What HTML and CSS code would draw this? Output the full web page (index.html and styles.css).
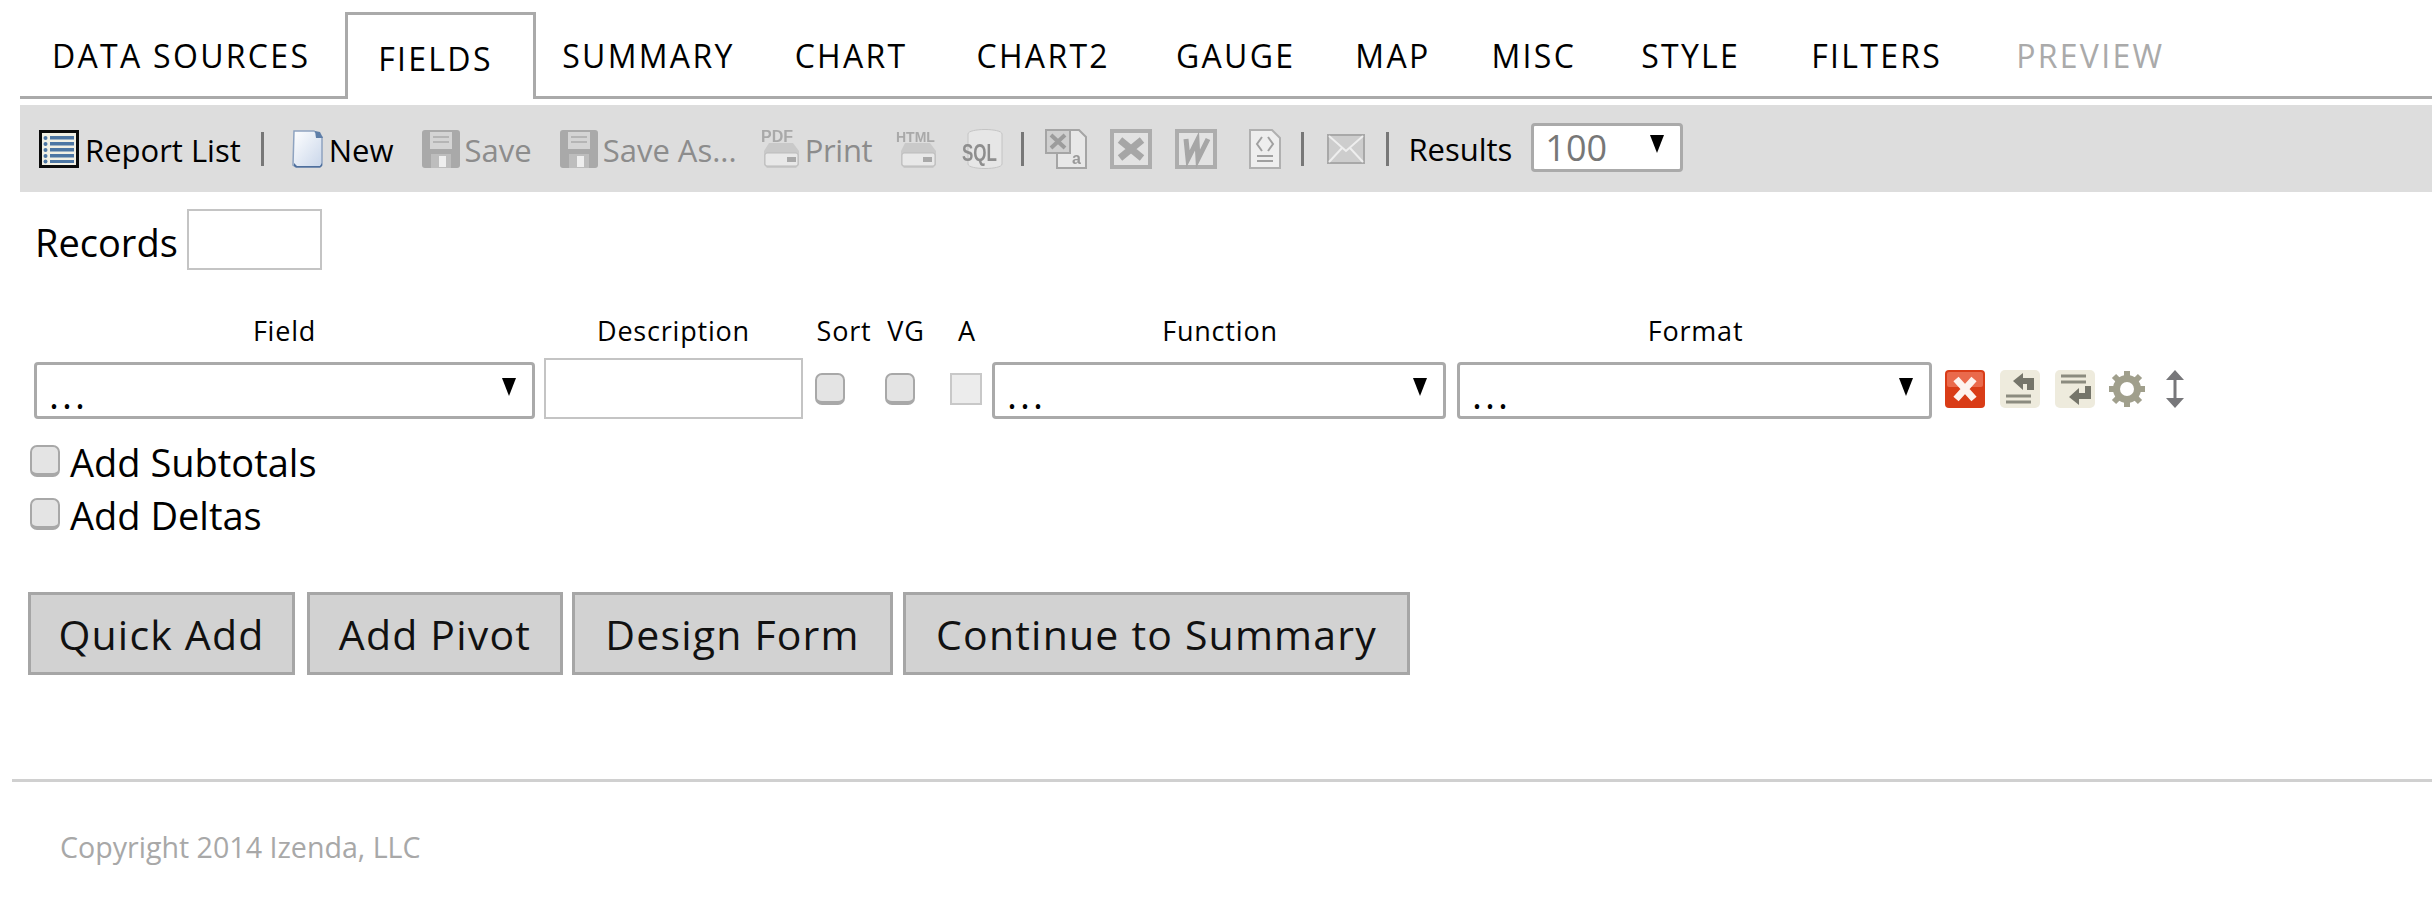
FILE: index.html
```html
<!DOCTYPE html>
<html lang="en">
<head>
    <meta charset="UTF-8">
    <title>Report Designer</title>
    <link rel="stylesheet" href="styles.css">
</head>
<body>
    <!-- Tabs -->
    <ul class="tabs">
        <li class="tab tab-data">DATA SOURCES</li>
        <li class="tab tab-active">FIELDS</li>
        <li class="tab tab-summary">SUMMARY</li>
        <li class="tab tab-chart">CHART</li>
        <li class="tab tab-chart2">CHART2</li>
        <li class="tab tab-gauge">GAUGE</li>
        <li class="tab tab-map">MAP</li>
        <li class="tab tab-misc">MISC</li>
        <li class="tab tab-style">STYLE</li>
        <li class="tab tab-filters">FILTERS</li>
        <li class="tab tab-preview">PREVIEW</li>
    </ul>

    <!-- Toolbar -->
    <div class="toolbar">
        <svg class="icon icon-list" viewBox="0 0 40 38">
            <rect x="1.5" y="1.5" width="37" height="35" fill="#f2f0e4" stroke="#0b0b0b" stroke-width="3"/>
            <g fill="#4d76a3">
                <rect x="11" y="6" width="24" height="3.5"/><rect x="11" y="12" width="24" height="3.5"/>
                <rect x="11" y="18" width="24" height="3.5"/><rect x="11" y="24" width="24" height="3.5"/>
                <rect x="11" y="30" width="24" height="3"/>
                <circle cx="6.5" cy="8" r="2"/><circle cx="6.5" cy="14" r="2"/><circle cx="6.5" cy="20" r="2"/>
                <circle cx="6.5" cy="26" r="2"/><circle cx="6.5" cy="31.5" r="2"/>
            </g>
        </svg>
        <span class="tool-text text-report">Report List</span>
        <span class="sep sep-a"></span>
        <svg class="icon icon-new" viewBox="0 0 32 38">
            <defs>
                <linearGradient id="page" x1="0" y1="0" x2="1" y2="1">
                    <stop offset="0" stop-color="#ffffff"/>
                    <stop offset="1" stop-color="#c9d6ea"/>
                </linearGradient>
            </defs>
            <path d="M2 1h20l8 6v28l-2 2H4l-3-2z" fill="url(#page)" stroke="#8ea3c0" stroke-width="1.5"/>
            <path d="M2 33l3 3h23l2-3v3l-2 1.5H4L2 36z" fill="#4e6f9c"/>
            <path d="M23 1l1 7 7 0-3-6z" fill="#5e7ea8"/>
        </svg>
        <span class="tool-text text-new">New</span>

        <svg class="icon icon-save off" viewBox="0 0 38 38">
            <rect width="38" height="38" rx="3" fill="#a9a9a9"/>
            <rect x="8" y="2" width="22" height="17" fill="#d4d4d4"/>
            <path d="M11 7h16M11 12h16" stroke="#b5b5b5" stroke-width="2"/>
            <rect x="9" y="24" width="20" height="14" fill="#bdbdbd"/>
            <rect x="17" y="26" width="7" height="11" fill="#eee"/>
        </svg>
        <span class="tool-text off-text text-save">Save</span>
        <svg class="icon icon-saveas off" viewBox="0 0 38 38">
            <rect width="38" height="38" rx="3" fill="#a9a9a9"/>
            <rect x="8" y="2" width="22" height="17" fill="#d4d4d4"/>
            <path d="M11 7h16M11 12h16" stroke="#b5b5b5" stroke-width="2"/>
            <rect x="9" y="24" width="20" height="14" fill="#bdbdbd"/>
            <rect x="17" y="26" width="7" height="11" fill="#eee"/>
        </svg>
        <span class="tool-text off-text text-saveas">Save As...</span>

        <svg class="icon icon-print off" viewBox="0 0 40 40">
            <path d="M8 14h24l6 8v14l-3 3H6l-3-3V22z" fill="#c9c9c9"/>
            <rect x="4" y="24" width="33" height="13" rx="2" fill="#e8e8e8" stroke="#bbb"/>
            <rect x="26" y="28" width="9" height="5" fill="#a9a9a9"/>
            <text x="0" y="13" class="icon-label">PDF</text>
        </svg>
        <span class="tool-text off-text text-print">Print</span>
        <svg class="icon icon-html off" viewBox="0 0 43 40">
            <path d="M9 14h25l6 8v14l-3 3H8l-3-3V22z" fill="#c9c9c9"/>
            <rect x="6" y="24" width="33" height="13" rx="2" fill="#e8e8e8" stroke="#bbb"/>
            <rect x="27" y="28" width="9" height="5" fill="#a9a9a9"/>
            <text x="0" y="13" class="icon-label icon-label-html">HTML</text>
        </svg>
        <svg class="icon icon-sql off" viewBox="0 0 42 40">
            <path d="M6 5c0-6 34-6 34 0v30c0 6-34 6-34 0z" fill="#e6e6e6" stroke="#c4c4c4"/>
            <text x="0" y="23" class="icon-sql-label" transform="scale(1 1.4)">SQL</text>
        </svg>
        <span class="sep sep-b"></span>

        <svg class="icon icon-doc off" viewBox="0 0 42 40">
            <path d="M12 1h22l7 7v31H12z" fill="#e8e8e8" stroke="#a5a5a5" stroke-width="2"/>
            <rect x="1" y="1" width="24" height="23" fill="#cfcfcf" stroke="#a5a5a5" stroke-width="2"/>
            <path d="M6 6l14 13M20 6L6 19" stroke="#9c9c9c" stroke-width="4"/>
            <text x="27" y="35" class="icon-a">a</text>
        </svg>
        <svg class="icon icon-excel off" viewBox="0 0 42 40">
            <rect x="2" y="2" width="38" height="36" fill="#e2e2e2" stroke="#adadad" stroke-width="4"/>
            <path d="M10 11l22 18M32 11L10 29" stroke="#a6a6a6" stroke-width="7"/>
        </svg>
        <svg class="icon icon-word off" viewBox="0 0 42 40">
            <rect x="2" y="2" width="38" height="36" fill="#e2e2e2" stroke="#adadad" stroke-width="4"/>
            <path d="M11 10l2 20 9-18 1 18 10-20" fill="none" stroke="#a6a6a6" stroke-width="5"/>
        </svg>
        <svg class="icon icon-code off" viewBox="0 0 34 40">
            <path d="M2 1h22l8 8v30H2z" fill="#eee" stroke="#b0b0b0" stroke-width="2"/>
            <path d="M14 8l-5 7 5 7M20 8l5 7-5 7M9 27h16M9 32h16" fill="none" stroke="#a0a0a0" stroke-width="2"/>
        </svg>
        <span class="sep sep-c"></span>
        <svg class="icon icon-mail off" viewBox="0 0 38 30">
            <rect x="1" y="1" width="36" height="28" fill="#cdcdcd" stroke="#a8a8a8" stroke-width="2"/>
            <path d="M2 2l17 15L36 2M2 28l13-14M36 28L23 14" fill="none" stroke="#eee" stroke-width="2"/>
        </svg>
        <span class="sep sep-d"></span>
        <span class="tool-text text-results">Results</span>
        <div class="pick pick-results">
            <span class="pick-value">100</span>
            <span class="pick-arrow"></span>
        </div>
    </div>

    <!-- Records -->
    <div class="records">
        <label class="records-label">Records</label>
        <input class="text-input records-input" type="text">
    </div>

    <!-- Field row -->
    <div class="field-heads">
        <span class="head head-field">Field</span>
        <span class="head head-desc">Description</span>
        <span class="head head-sort">Sort</span>
        <span class="head head-vg">VG</span>
        <span class="head head-a">A</span>
        <span class="head head-func">Function</span>
        <span class="head head-format">Format</span>
    </div>
    <div class="field-row">
        <div class="pick pick-field"><span class="dots">...</span><span class="pick-arrow"></span></div>
        <input class="text-input desc-input" type="text">
        <span class="check check-sort"></span>
        <span class="check check-vg"></span>
        <span class="check-off"></span>
        <div class="pick pick-func"><span class="dots">...</span><span class="pick-arrow"></span></div>
        <div class="pick pick-format"><span class="dots">...</span><span class="pick-arrow"></span></div>

        <svg class="icon icon-x" viewBox="0 0 40 38">
            <rect width="40" height="38" rx="4" fill="#d93c17"/>
            <rect x="2" y="2" width="36" height="15" rx="2" fill="#ea6a4c"/>
            <path d="M11 9l18 20M29 9L11 29" stroke="#fdf3ef" stroke-width="7"/>
        </svg>
        <svg class="icon icon-left" viewBox="0 0 40 38">
            <rect width="40" height="38" rx="5" fill="#eeebdd"/>
            <path d="M13 11l10-8v5h11v12h-7v-6h-4v6z" fill="#75756a"/>
            <path d="M6 26h25M6 32h25" stroke="#8b8b7f" stroke-width="3"/>
        </svg>
        <svg class="icon icon-right" viewBox="0 0 40 38">
            <rect width="40" height="38" rx="5" fill="#eeebdd"/>
            <path d="M6 6h25M6 12h25" stroke="#8b8b7f" stroke-width="3"/>
            <path d="M14 27l10-9v5h6v-7h6v13H24v6z" fill="#75756a"/>
        </svg>
        <svg class="icon icon-gear" viewBox="0 0 38 38">
            <circle cx="19" cy="19" r="10" fill="none" stroke="#a09f8c" stroke-width="8"/>
            <path d="M19 1v36M1 19h36M6 6l26 26M32 6L6 32" stroke="#a09f8c" stroke-width="6"/>
            <circle cx="19" cy="19" r="7" fill="#fff"/>
        </svg>
        <svg class="icon icon-updown" viewBox="0 0 20 38">
            <path d="M10 0l9 10H1zM10 38l9-10H1z" fill="#77777a"/>
            <path d="M10 8v22" stroke="#77777a" stroke-width="3"/>
        </svg>
    </div>

    <!-- Options -->
    <div class="option option-first"><span class="check"></span><span>Add Subtotals</span></div>
    <div class="option"><span class="check"></span><span>Add Deltas</span></div>

    <!-- Buttons -->
    <div class="buttons">
        <button class="btn btn-quick">Quick Add</button>
        <button class="btn btn-pivot">Add Pivot</button>
        <button class="btn btn-design">Design Form</button>
        <button class="btn btn-continue">Continue to Summary</button>
    </div>

    <hr class="rule">
    <p class="copyright">Copyright 2014 Izenda, LLC</p>
</body>
</html>
```

FILE: styles.css
```css
body {
    font-family: 'Open Sans', 'Noto Sans', sans-serif;
    background-color: #fff;
    color: #000;
    margin: 0;
    padding: 0;
    width: 2432px;
    height: 911px;
    overflow: hidden;
}

/* tabs */
.tabs {
    display: flex;
    align-items: flex-end;
    list-style: none;
    margin: 12px 0 0 20px;
    padding: 0;
    height: 84px;
    border-bottom: 3px solid #aaa;
    font-size: 32px;
    letter-spacing: 2.3px;
    box-sizing: content-box;
}

.tab {
    padding-bottom: 18px;
    line-height: 44px;
    white-space: nowrap;
}

.tab-data { margin-left: 32px; }

.tab-active {
    margin: 0 0 -3px 35px;
    flex: none;
    width: 191px;
    height: 87px;
    box-sizing: border-box;
    border: 3px solid #aaa;
    border-bottom: none;
    background: #fff;
    padding: 22px 0 0 30px;
}

.tab-summary { margin-left: 26px; }
.tab-chart { margin-left: 60px; }
.tab-chart2 { margin-left: 69px; }
.tab-gauge { margin-left: 66px; }
.tab-map { margin-left: 60px; }
.tab-misc { margin-left: 61px; }
.tab-style { margin-left: 65px; }
.tab-filters { margin-left: 71px; }
.tab-preview { margin-left: 74px; color: #aaa; }

/* toolbar */
.toolbar {
    display: flex;
    align-items: center;
    margin: 6px 0 0 20px;
    height: 87px;
    background-color: #dddddd;
}

.icon { display: block; flex: none; }

.off { filter: blur(0.7px); }

.tool-text {
    font-size: 31px;
    letter-spacing: 0;
    line-height: 44px;
    white-space: nowrap;
    margin-top: 3px;
}

.off-text { color: #8c8c8c; }

.sep {
    flex: none;
    width: 3px;
    height: 34px;
    background-color: #777;
}

.icon-list { width: 40px; height: 38px; margin-left: 19px; }
.text-report { margin-left: 6px; }
.sep-a { margin-left: 20px; }
.icon-new { width: 32px; height: 38px; margin-left: 28px; }
.text-new { margin-left: 5px; }
.icon-save { width: 38px; height: 38px; margin-left: 28px; }
.text-save { margin-left: 5px; }
.icon-saveas { width: 38px; height: 38px; margin-left: 28px; }
.text-saveas { margin-left: 5px; }
.icon-print { width: 40px; height: 40px; margin-left: 24px; }
.text-print { margin-left: 4px; letter-spacing: -0.3px; }
.icon-html { width: 43px; height: 40px; margin-left: 24px; }
.icon-sql { width: 42px; height: 40px; margin-left: 23px; }
.sep-b { margin-left: 17px; }
.icon-doc { width: 42px; height: 40px; margin-left: 21px; }
.icon-excel { width: 42px; height: 40px; margin-left: 23px; }
.icon-word { width: 42px; height: 40px; margin-left: 23px; }
.icon-code { width: 34px; height: 40px; margin-left: 31px; }
.sep-c { margin-left: 19px; }
.icon-mail { width: 38px; height: 30px; margin-left: 23px; }
.sep-d { margin-left: 21px; }
.text-results { margin-left: 19px; margin-top: 0; }

.icon-label {
    font-family: 'Liberation Sans', sans-serif;
    font-size: 16px;
    font-weight: bold;
    fill: #a9a9a9;
}

.icon-label-html { font-size: 14px; }

.icon-sql-label {
    font-family: 'Liberation Sans', sans-serif;
    font-size: 17px;
    font-weight: bold;
    fill: #8e8e8e;
}

.icon-a {
    font-family: 'Liberation Sans', sans-serif;
    font-size: 16px;
    font-weight: bold;
    fill: #999;
}

/* selects drawn as boxes */
.pick {
    display: flex;
    align-items: center;
    justify-content: space-between;
    flex: none;
    box-sizing: border-box;
    height: 57px;
    background: #fff;
    border: 3px solid #aaa;
    border-radius: 4px;
}

.pick-arrow {
    flex: none;
    width: 0;
    height: 0;
    margin: -8px 16px 0 0;
    border-left: 7px solid transparent;
    border-right: 7px solid transparent;
    border-top: 18px solid #000;
}

.pick-results {
    width: 152px;
    height: 49px;
    margin: -2px 0 0 19px;
    padding-left: 11px;
}

.pick-value {
    font-size: 36px;
    line-height: 43px;
    color: #777;
}

.dots {
    font-size: 38px;
    line-height: 1;
    margin: 6px 0 0 12px;
    letter-spacing: 3px;
}

.pick-field { width: 501px; }
.pick-func { width: 454px; }
.pick-format { width: 475px; margin-left: 11px; }

/* text inputs */
.text-input {
    display: block;
    box-sizing: border-box;
    margin: 0;
    padding: 0;
    background: #fff;
    border: 2px solid #c4c4c4;
    border-radius: 0;
}

/* records */
.records {
    display: flex;
    align-items: flex-start;
    margin: 17px 0 0 35px;
}

.records-label {
    font-size: 38px;
    line-height: 55px;
    margin-top: 6px;
}

.records-input {
    width: 135px;
    height: 61px;
    margin-left: 9px;
}

/* field row */
.field-heads {
    display: flex;
    margin: 42px 0 0 34px;
    height: 38px;
    font-size: 27px;
    line-height: 38px;
    letter-spacing: 0.8px;
}

.head { display: block; flex: none; text-align: center; }

.head-field { width: 501px; }
.head-desc { width: 259px; margin-left: 9px; }
.head-sort { width: 64px; margin-left: 9px; }
.head-vg { width: 44px; margin-left: 8px; }
.head-a { width: 40px; margin-left: 19px; }
.head-func { width: 454px; margin-left: 6px; }
.head-format { width: 475px; margin-left: 11px; }

.field-row {
    display: flex;
    align-items: center;
    margin: 8px 0 0 34px;
    height: 61px;
}

.field-row .pick { margin-top: 4px; }

.desc-input { width: 259px; height: 61px; margin-left: 9px; }

.check {
    display: block;
    flex: none;
    box-sizing: border-box;
    width: 30px;
    height: 32px;
    border: 2px solid #a8a8a8;
    border-bottom-width: 4px;
    border-radius: 7px;
    background: #e4e4e4;
}

.check-sort { margin-left: 12px; }
.check-vg { margin-left: 40px; }

.check-off {
    display: block;
    flex: none;
    box-sizing: border-box;
    width: 32px;
    height: 32px;
    margin: 0 10px 0 35px;
    border: 2px solid #c8c8c8;
    background: #ececec;
}

.icon-x { width: 40px; height: 38px; margin-left: 13px; }
.icon-left { width: 40px; height: 38px; margin-left: 15px; }
.icon-right { width: 40px; height: 38px; margin-left: 15px; }
.icon-gear { width: 38px; height: 38px; margin-left: 13px; }
.icon-updown { width: 20px; height: 38px; margin-left: 19px; }

/* options */
.option {
    display: flex;
    align-items: center;
    margin: 0 0 0 30px;
    height: 53px;
    font-size: 38px;
    line-height: 53px;
}

.option .check { margin: -4px 10px 0 0; }

.option-first { margin-top: 17px; }

/* buttons */
.buttons {
    display: flex;
    margin: 50px 0 0 28px;
}

.btn {
    display: block;
    box-sizing: border-box;
    height: 83px;
    padding: 0;
    background-color: #d2d2d2;
    border: 3px solid #a6a6a6;
    font-family: 'Open Sans', 'Noto Sans', sans-serif;
    font-size: 41px;
    letter-spacing: 1.2px;
    color: #111;
}

.btn-quick { width: 267px; }
.btn-pivot { width: 256px; margin-left: 12px; }
.btn-design { width: 321px; margin-left: 9px; }
.btn-continue { width: 507px; margin-left: 10px; }

/* footer */
.rule {
    margin: 104px 0 0 12px;
    height: 3px;
    border: none;
    background-color: #d0d0d0;
}

.copyright {
    margin: 45px 0 0 60px;
    font-size: 28.6px;
    line-height: 40px;
    color: #a8a8a8;
}
```
